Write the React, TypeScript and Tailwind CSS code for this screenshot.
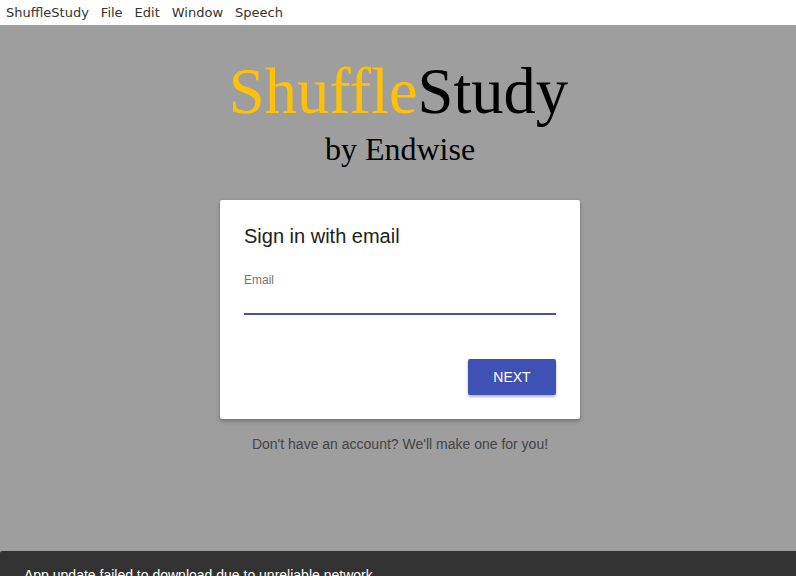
export default function App() {
  return (
    <div className="relative w-[796px] h-[576px] overflow-hidden bg-[#9e9e9e]">
      <div className="h-[25px] bg-white flex items-center gap-[12px] px-[6px] text-[13px] text-[#333] font-['DejaVu_Sans',sans-serif]">
        <span>ShuffleStudy</span>
        <span>File</span>
        <span>Edit</span>
        <span>Window</span>
        <span>Speech</span>
      </div>
      <div className="flex flex-col items-center pl-[4px]">
        <div className="mt-[29px] mr-[3px] font-['Liberation_Serif',serif] text-[64.5px] leading-[76px]">
          <span className="text-[#ffc107]">Shuffle</span>
          <span className="text-black">Study</span>
        </div>
        <div className="font-['Liberation_Serif',serif] text-[32px] leading-[38px] text-black">by Endwise</div>
        <div className="mt-[32px] w-[360px] bg-white rounded-[2px] shadow-[0_2px_4px_rgba(0,0,0,0.3)] px-[24px] pt-[24px] pb-[24px] font-['Liberation_Sans',sans-serif]">
          <div className="text-[20px] leading-[24px] text-[#212121]">Sign in with email</div>
          <div className="mt-[25px] text-[12px] leading-[14px] text-[#757575]">Email</div>
          <div className="mt-[26px] h-[2px] bg-[#3f51b5]"></div>
          <div className="mt-[44px] flex justify-end">
            <button className="w-[88px] h-[36px] bg-[#3f51b5] text-white text-[14px] rounded-[2px] shadow-[0_2px_3px_rgba(0,0,0,0.3)]">NEXT</button>
          </div>
        </div>
        <div className="mt-[17px] text-[14px] leading-[16px] text-[#444] font-['Liberation_Sans',sans-serif]">Don't have an account? We'll make one for you!</div>
      </div>
      <div className="absolute left-0 right-0 top-[551px] h-[60px] bg-[#323232] rounded-tl-[2px] px-[24px] pt-[14px] text-[14px] leading-[20px] text-white font-['Liberation_Sans',sans-serif]">
        App update failed to download due to unreliable network
      </div>
    </div>
  );
}
